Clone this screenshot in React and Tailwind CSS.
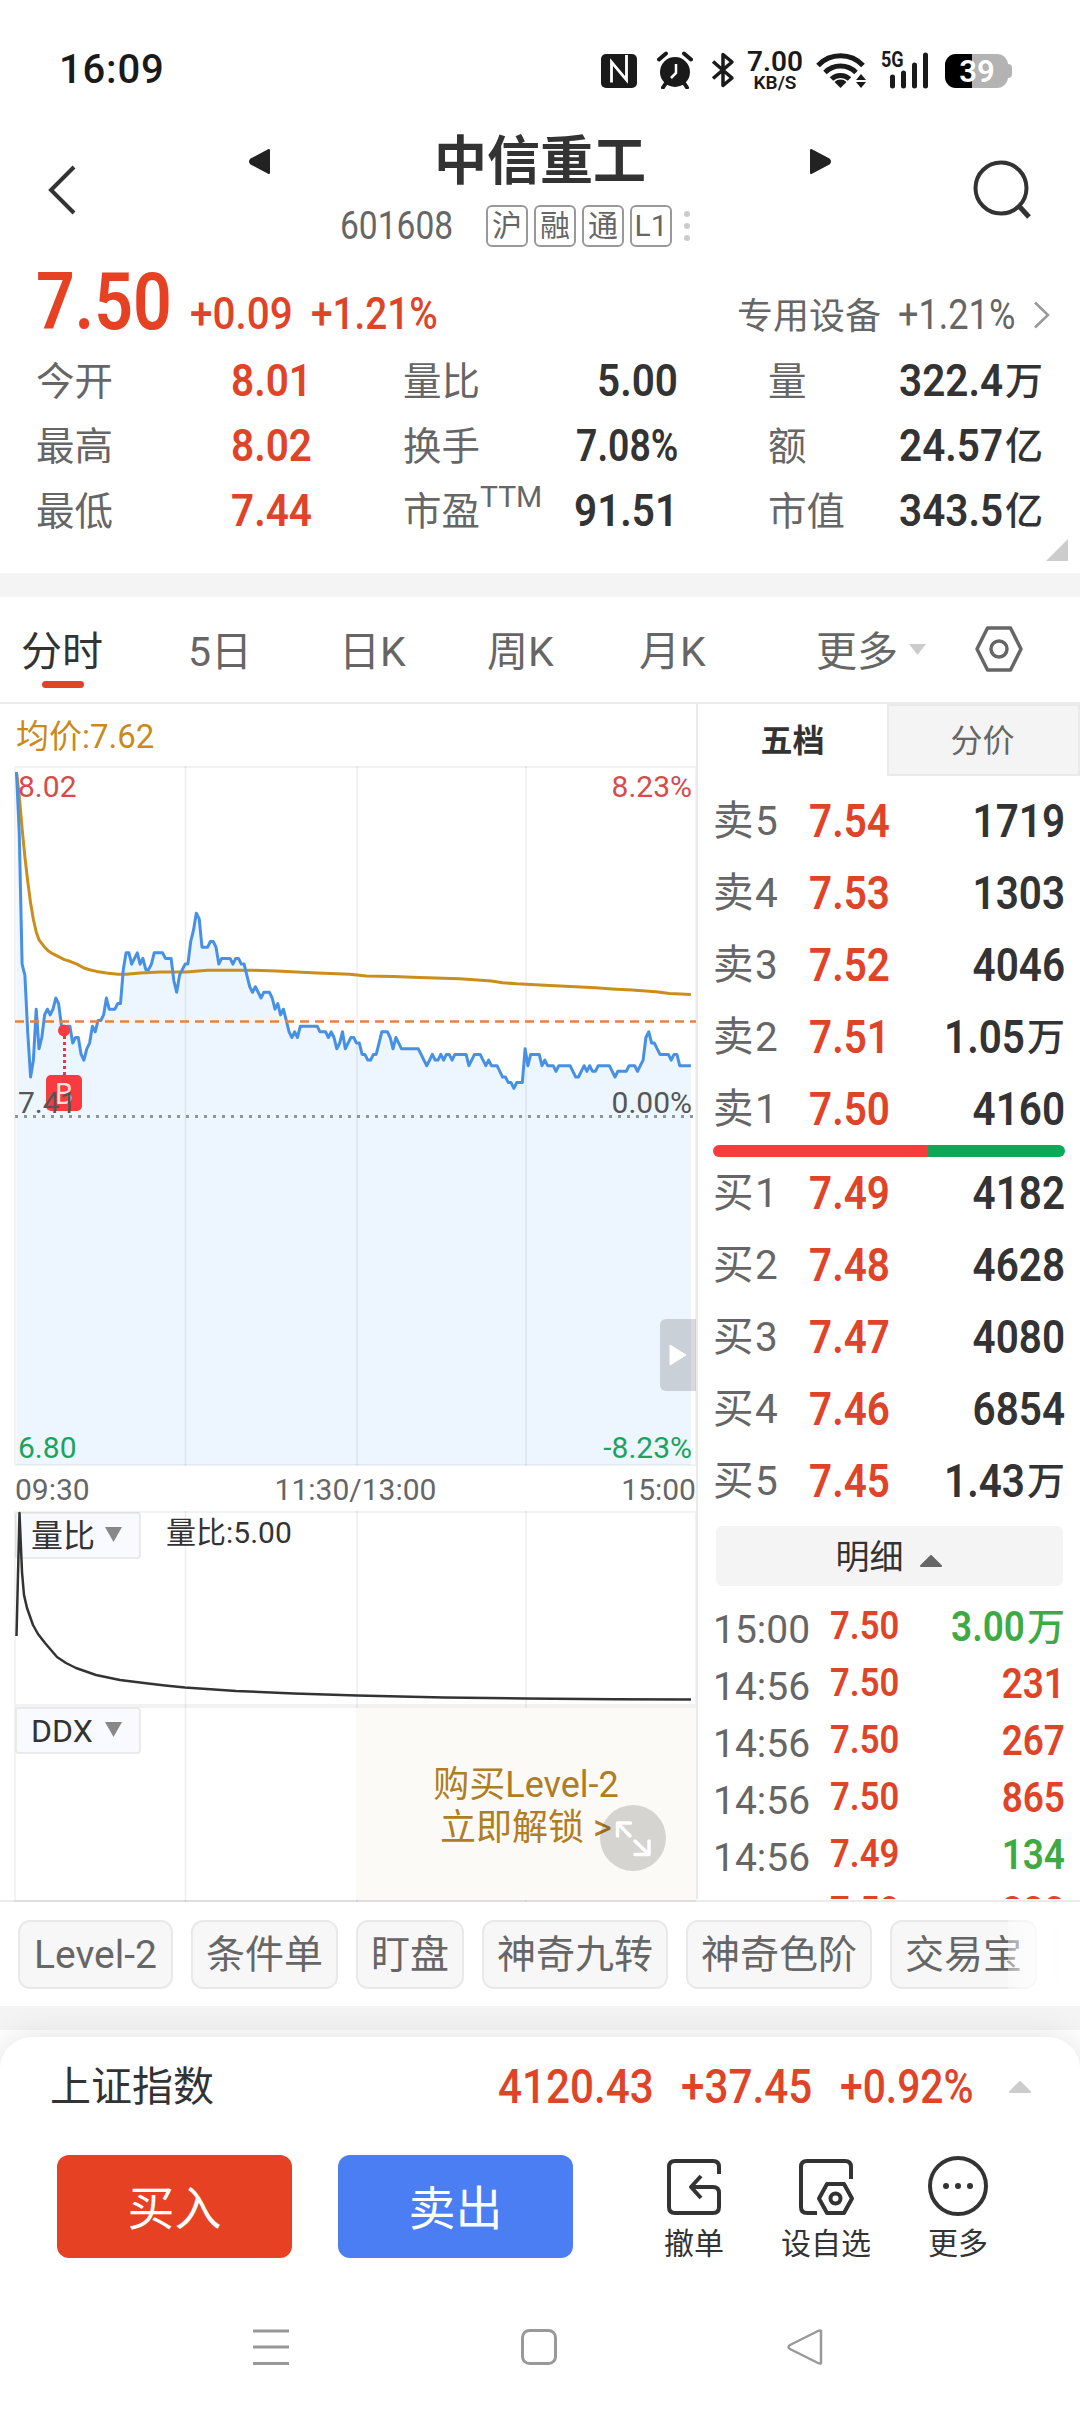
import clsx from "clsx";

// intraday data, [minute, price in cents]
const PRICES = [
  [0, 802], [1, 791], [2, 768], [3, 766], [4, 756], [5, 748], [6, 751], [7, 760],
  [8, 753], [9, 755], [10, 759], [11, 760], [12, 759], [13, 760], [14, 762], [15, 761],
  [16, 757], [17, 756], [18, 757], [19, 757], [20, 754], [21, 755], [22, 755], [23, 752],
  [24, 751], [25, 753], [26, 754], [27, 757], [28, 756], [29, 758], [30, 758], [31, 759],
  [32, 762], [33, 760], [35, 760], [36, 761], [37, 761], [38, 767], [39, 770], [40, 770],
  [41, 768], [42, 769], [43, 770], [44, 768], [45, 769], [46, 767], [47, 767], [48, 768],
  [49, 770], [52, 770], [53, 769], [55, 769], [56, 765], [57, 763], [58, 766], [59, 767],
  [60, 768], [61, 768], [62, 772], [63, 774], [64, 777], [65, 776], [66, 771], [68, 771],
  [69, 772], [70, 772], [71, 771], [72, 768], [73, 769], [76, 769], [77, 768], [78, 769],
  [79, 769], [80, 768], [81, 768], [82, 766], [83, 764], [84, 763], [85, 764], [86, 763],
  [87, 762], [88, 763], [90, 763], [91, 762], [92, 760], [93, 761], [94, 759], [95, 760],
  [96, 758], [97, 756], [98, 755], [99, 756], [100, 755], [101, 757], [107, 757], [108, 756],
  [110, 756], [111, 755], [112, 756], [113, 755], [114, 753], [115, 754], [116, 756], [117, 753],
  [118, 754], [119, 755], [120, 755], [121, 754], [122, 754], [123, 752], [124, 752], [125, 751],
  [126, 751], [127, 752], [128, 752], [129, 754], [130, 756], [132, 756], [133, 755], [134, 753],
  [135, 755], [136, 754], [137, 753], [143, 753], [144, 752], [145, 751], [146, 750], [147, 751],
  [148, 752], [149, 751], [150, 751], [151, 752], [152, 751], [153, 752], [154, 752], [155, 751],
  [156, 752], [160, 752], [161, 750], [162, 751], [163, 752], [165, 752], [166, 751], [167, 750],
  [168, 751], [169, 750], [171, 750], [172, 749], [173, 748], [174, 748], [175, 747], [176, 747],
  [177, 746], [178, 747], [180, 747], [181, 753], [182, 750], [183, 752], [186, 752], [187, 750],
  [188, 751], [189, 750], [191, 750], [192, 749], [193, 750], [197, 750], [198, 749], [199, 748],
  [200, 748], [201, 749], [202, 750], [203, 749], [204, 750], [205, 749], [206, 749], [207, 750],
  [211, 750], [212, 749], [213, 748], [214, 749], [217, 749], [218, 750], [220, 750], [221, 749],
  [222, 750], [223, 751], [224, 755], [225, 756], [226, 754], [227, 754], [228, 753], [229, 752],
  [232, 752], [233, 751], [234, 752], [235, 752], [236, 750], [240, 750],
];

const AVERAGES = [
  [0, 802], [1, 797.7], [2, 792], [3, 787], [4, 782.7], [5, 778.8], [6, 775.9], [7, 773.7],
  [8, 772.3], [10, 771], [11.4, 770.3], [13, 769.8], [15, 769.3], [17, 768.8], [19, 768.5],
  [21.5, 768], [24, 767.3], [26, 767], [28.5, 766.7], [32, 766.4], [36, 766.2], [39, 766.2],
  [44, 766.4], [51, 766.6], [60.5, 766.6], [68, 766.9], [84, 766.9], [92.5, 766.8],
  [99.6, 766.6], [107, 766.4], [118.6, 766.2], [124.5, 765.9], [134, 765.8], [143.5, 765.6],
  [157.7, 765.4], [169, 765], [173, 764.7], [178, 764.5], [189.7, 764.2], [199, 764],
  [206, 763.8], [212, 763.6], [219, 763.4], [227.6, 763.1], [232.4, 762.8], [240, 762.6],
];

const toPoints = (list) =>
  list
    .map(([m, p]) => `${(2.5 + m * 2.81).toFixed(1)},${(350.5 - (p - 741) * 5.645).toFixed(1)}`)
    .join(" ");

const pricePoints = toPoints(PRICES);
const averagePoints = toPoints(AVERAGES);

const STATS = [
  [["今开", "8.01"], ["量比", "5.00"], ["量", "322.4", "万"]],
  [["最高", "8.02"], ["换手", "7.08%"], ["额", "24.57", "亿"]],
  [["最低", "7.44"], ["市盈", "91.51"], ["市值", "343.5", "亿"]],
];

const SELLS = [
  ["卖5", "7.54", "1719"],
  ["卖4", "7.53", "1303"],
  ["卖3", "7.52", "4046"],
  ["卖2", "7.51", "1.05", "万"],
  ["卖1", "7.50", "4160"],
];

const BUYS = [
  ["买1", "7.49", "4182"],
  ["买2", "7.48", "4628"],
  ["买3", "7.47", "4080"],
  ["买4", "7.46", "6854"],
  ["买5", "7.45", "1.43", "万"],
];

const TRADES = [
  { time: "15:00", price: "7.50", volume: "3.00", unit: "万", up: false },
  { time: "14:56", price: "7.50", volume: "231", up: true },
  { time: "14:56", price: "7.50", volume: "267", up: true },
  { time: "14:56", price: "7.50", volume: "865", up: true },
  { time: "14:56", price: "7.49", volume: "134", up: false },
  { time: "14:56", price: "7.50", volume: "880", up: true },
];

// narrow digits, anchored to the left or to the right edge
const Num = ({ children, className, left }) => (
  <span
    className={clsx(
      "inline-block whitespace-nowrap scale-x-[0.89]",
      left ? "origin-left" : "origin-right",
      className
    )}
  >
    {children}
  </span>
);

const Value = ({ value, unit, className, numClassName }) => (
  <span className={clsx("flex items-center whitespace-nowrap", className)}>
    <Num className={clsx("font-semibold", numClassName)}>{value}</Num>
    {unit && <span className="ml-0.5 text-[38px] font-medium">{unit}</span>}
  </span>
);

const StatusBar = () => (
  <div className="h-[110px] pt-[50px] pl-[59px] flex items-start text-[#1a1a1a]">
    <span className="w-[542px] text-[40px] leading-[40px] font-medium tracking-[0.8px]">
      16:09
    </span>
    {/* nfc */}
    <svg width="36" height="34" viewBox="0 0 36 34" className="mt-1">
      <rect width="36" height="34" rx="5" fill="#1a1a1a" />
      <path d="M10.500 28.500V8L25.500 26V1" fill="none" stroke="#fff" strokeWidth="2.800" />
    </svg>
    {/* alarm */}
    <svg width="36" height="38" viewBox="0 0 36 38" className="ml-5 mt-px">
      <circle cx="18" cy="21" r="15" fill="#1a1a1a" />
      <path d="M2 8.500 9 2.500M34 8.500 27 2.500M9 32l-3 4.500M27 32l3 4.500" stroke="#1a1a1a" strokeWidth="4" strokeLinecap="round" />
      <path d="M19 13v9l-5 5" fill="none" stroke="#fff" strokeWidth="2.500" />
    </svg>
    {/* bluetooth */}
    <svg width="24" height="36" viewBox="0 0 24 36" className="ml-[18px] mt-0.5">
      <path d="M2 9.500 21 26 12 33.500V2.500L21 10 2 26.500" fill="none" stroke="#1a1a1a" strokeWidth="3.500" strokeLinejoin="round" />
    </svg>
    <div className="ml-[11px] w-[58px] flex flex-col items-center">
      <span className="text-[28px] leading-[24px] font-semibold">7.00</span>
      <span className="text-[19px] leading-[17px] font-semibold">KB/S</span>
    </div>
    {/* wifi */}
    <svg width="50" height="38" viewBox="0 0 50 38" className="ml-3 mt-0.5">
      <g fill="none" stroke="#1a1a1a" strokeWidth="5">
        <path d="M2 13.500a31 31 0 0 1 45 0" />
        <path d="M9 20.500a22 22 0 0 1 31 0" />
        <path d="M15.500 27a13 13 0 0 1 18 0" />
      </g>
      <path d="M24.500 36l-6-6a8.500 8.500 0 0 1 12 0z" fill="#1a1a1a" />
      <path d="M45 22l5 6h-10zM45 36l5-6h-10z" fill="#1a1a1a" />
    </svg>
    {/* signal */}
    <div className="relative ml-[15px] mt-px w-[50px] h-[38px]">
      <span className="absolute left-0 top-0 text-[22px] leading-[18px] font-bold scale-x-[0.82] origin-left">5G</span>
      <svg width="50" height="38" viewBox="0 0 50 38">
        <path d="M11.500 26v9M22.500 22v13M33.500 14v21M44.500 4v31" stroke="#1a1a1a" strokeWidth="5" strokeLinecap="round" />
      </svg>
    </div>
    {/* battery */}
    <div className="relative ml-[14px] mt-1 w-[67px] h-[34px] flex items-center">
      <div className="w-[63px] h-[34px] rounded-[11px] bg-[#b3b3b3] overflow-hidden">
        <div className="w-[27px] h-full bg-black" />
      </div>
      <div className="w-[4px] h-[14px] rounded-r-[4px] bg-[#b3b3b3]" />
      <span className="absolute left-0 top-0 w-[64px] text-center text-white text-[31px] leading-[36px] font-semibold">39</span>
    </div>
  </div>
);

const Header = () => (
  <div className="h-[148px] flex items-start">
    <svg width="32" height="52" viewBox="0 0 32 52" className="ml-[46px] mt-[54px]">
      <path d="M28 3 5 26l23 23" fill="none" stroke="#333" strokeWidth="4" />
    </svg>
    <div className="ml-[171px] w-[582px] pt-[20px]">
      <div className="flex items-center justify-between">
        <svg width="21" height="27" viewBox="0 0 21 27">
          <path d="M20 2v23L2 15.500q-2-2 0-4z" fill="#222" stroke="#222" strokeWidth="2" strokeLinejoin="round" />
        </svg>
        <h1 className="pt-0.5 text-[53px] leading-[60px] font-bold text-[#333]">中信重工</h1>
        <svg width="21" height="27" viewBox="0 0 21 27">
          <path d="M1 2v23l18-9.500q2-2 0-4z" fill="#222" stroke="#222" strokeWidth="2" strokeLinejoin="round" />
        </svg>
      </div>
      <div className="mt-[13px] pl-[91px] flex items-center text-[#666]">
        <Num left className="w-[146px] text-[39px] leading-[42px] scale-x-[0.86]!">601608</Num>
        <div className="flex gap-1.5 text-[30px]">
          {["沪", "融", "通", "L1"].map((tag) => (
            <span key={tag} className="w-[42px] h-[42px] border-2 border-[#999] rounded-[6px] flex items-center justify-center leading-none">
              {tag}
            </span>
          ))}
        </div>
        <svg width="6" height="34" viewBox="0 0 6 34" className="ml-3" fill="#ccc">
          <circle cx="3" cy="5" r="3" />
          <circle cx="3" cy="17" r="3" />
          <circle cx="3" cy="29" r="3" />
        </svg>
      </div>
    </div>
    <svg width="60" height="62" viewBox="0 0 60 62" className="ml-[141px] mt-[48px]">
      <g fill="none" stroke="#333" strokeWidth="4">
        <circle cx="29" cy="30" r="25.500" />
        <path d="M47 48l10 11" strokeWidth="5" />
      </g>
    </svg>
  </div>
);

const Quote = () => (
  <div className="relative h-[315px]">
    <div className="h-[90px] pl-[36px] flex items-baseline">
      <Num left className="w-[154px] text-[80px] leading-[88px] font-semibold text-[#e74124] scale-x-[0.85]!">7.50</Num>
      <Num left className="w-[121px] text-[44px] font-medium text-[#e04428] scale-x-[0.92]!">+0.09</Num>
      <Num left className="w-[426px] text-[44px] font-medium text-[#e04428] scale-x-[0.88]!">+1.21%</Num>
      <span className="text-[36px] text-[#666]">专用设备</span>
      <Num left className="ml-[17px] w-[135px] text-[42px] text-[#666] scale-x-[0.86]!">+1.21%</Num>
      <svg width="18" height="28" viewBox="0 0 18 28">
        <path d="M2 1.500 15 14 2 26.500" fill="none" stroke="#999" strokeWidth="2.500" />
      </svg>
    </div>
    {STATS.map((row, i) => (
      <div key={i} className="h-[65px] pl-[36px] flex items-center text-[38.500px] text-[#666]">
        {row.map(([label, value, unit], col) => (
          <div
            key={label}
            className={clsx(
              "flex items-center justify-between",
              col === 0 && "w-[276px]",
              col === 1 && "ml-[91px] w-[275px]",
              col === 2 && "ml-[90px] w-[275px]"
            )}
          >
            <span className="flex pt-[3px]">
              {label}
              {label === "市盈" && <span className="-mt-[11px] text-[30px] leading-[30px]">TTM</span>}
            </span>
            <Value
              value={value}
              unit={unit}
              className={clsx("text-[44px]", col === 0 ? "text-[#e04428]" : "text-[#333]")}
              numClassName={value.includes("%") ? "scale-x-[0.85]!" : "scale-x-[0.92]!"}
            />
          </div>
        ))}
      </div>
    ))}
    <svg width="22" height="22" viewBox="0 0 22 22" className="absolute right-3 bottom-[12px]">
      <path d="M22 0v22H0z" fill="#ccc" />
    </svg>
  </div>
);

const PeriodTabs = () => (
  <div className="h-[107px] pl-[21px] flex items-start border-b-2 border-[#eaeaea] text-[41px] leading-[50px] text-[#666] pt-[30px]">
    <div className="w-[167px] text-[#333]">
      分时
      <div className="ml-[21px] mt-1 w-[42px] h-[7px] rounded-full bg-[#e04428]" />
    </div>
    <span className="w-[151px]">5日</span>
    <span className="w-[148px]">日K</span>
    <span className="w-[152px]">周K</span>
    <span className="w-[177px]">月K</span>
    <span>更多</span>
    <svg width="17" height="11" viewBox="0 0 17 11" className="ml-[11px] mt-[17px]">
      <path d="M0 0h17L8.500 11z" fill="#ccc" />
    </svg>
    <svg width="48" height="46" viewBox="0 0 48 46" className="ml-[49px] -mt-px">
      <g fill="none" stroke="#666" strokeWidth="3.500" strokeLinejoin="round">
        <path d="M12.500 2h23L46 23 35.500 44h-23L2 23z" />
        <circle cx="24" cy="23" r="8" />
      </g>
    </svg>
  </div>
);

const GridLines = ({ height }) => (
  <g stroke="#000" strokeOpacity="0.07" strokeWidth="1.500" fill="none">
    <path d={`M171.500 0v${height}M343 0v${height}M512 0v${height}`} />
    <rect x="1" y="1" width="681" height={height - 2} />
  </g>
);

const PriceChart = () => (
  <div className="relative ml-[14px] h-[700px] text-[30px] leading-[30px]">
    <svg width="682" height="700" viewBox="0 0 682 700" className="absolute inset-0">
      <polygon points={`2.500,699 ${pricePoints} 677,699`} fill="#edf5fe" />
      <GridLines height={700} />
      <polyline points={averagePoints} fill="none" stroke="#cb8d1c" strokeWidth="3" strokeLinejoin="round" />
      <polyline points={pricePoints} fill="none" stroke="#4690e6" strokeWidth="3" strokeLinejoin="round" />
      <path d="M1 255.500h681" stroke="#e5823c" strokeWidth="2.500" strokeDasharray="9 6" />
      <path d="M1 350.500h678" stroke="#8d959d" strokeWidth="3" strokeDasharray="3 6" />
      <path d="M50.500 270v39" stroke="#dd3c40" strokeWidth="3" strokeDasharray="3 3" />
      <circle cx="50" cy="264.500" r="6" fill="#f83b3e" />
      <rect x="32" y="309" width="36" height="36" rx="5" fill="#f83b3e" />
      <text x="50" y="338" fontSize="29" textAnchor="middle" fill="#fdd">B</text>
    </svg>
    <div className="relative h-full flex flex-col justify-between pl-[4px] pr-[4px] pt-[6px] pb-[3px]">
      <div className="flex justify-between text-[#d94a4a]">
        <span>8.02</span>
        <span>8.23%</span>
      </div>
      <div className="flex justify-between text-[#555] -mt-[30px]">
        <span>7.41</span>
        <span>0.00%</span>
      </div>
      <div className="flex justify-between text-[#1ba35e]">
        <span>6.80</span>
        <span>-8.23%</span>
      </div>
    </div>
    <div className="absolute right-0 top-[553px] w-[36px] h-[72px] rounded-l-[6px] bg-black/15 flex items-center justify-center">
      <svg width="18" height="22" viewBox="0 0 18 22">
        <path d="M1 1v20l16-10z" fill="#fff" stroke="#fff" strokeLinejoin="round" />
      </svg>
    </div>
  </div>
);

const IndicatorSelect = ({ label }) => (
  <div className="w-[126px] h-[47px] pl-[14px] pt-px flex items-center border-2 border-[#eaeaea] rounded-[4px] bg-[#f8faff] text-[32px] leading-none text-[#333]">
    <span className="w-[74px] whitespace-nowrap">{label}</span>
    <svg width="17" height="15" viewBox="0 0 17 15" className="-mt-1">
      <path d="M0 0h17L8.500 15z" fill="#888" />
    </svg>
  </div>
);

const VolumeRatioChart = () => (
  <div className="relative ml-[14px] h-[195px]">
    <div className="flex items-start pt-px pl-px">
      <IndicatorSelect label="量比" />
      <span className="ml-[25px] mt-[4px] text-[30px] leading-[34px] text-[#333]">量比:5.00</span>
    </div>
    <svg width="682" height="195" viewBox="0 0 682 195" className="absolute inset-0">
      <GridLines height={195} />
      <path
        d="M2.500 125 5.500 2 8 61 10 84 13 97 19 114 24 123 31 132 43 146 52 152 62 157 82 164 106 169 130 172 151 174.500 171 176.500 222 180 280 182.500 343 184.500 430 186.500 511 187.500 600 188.200 677 188.500"
        fill="none"
        stroke="#333"
        strokeWidth="2.500"
        strokeLinejoin="round"
      />
    </svg>
  </div>
);

const LockedChart = () => (
  <div className="relative ml-[14px] h-[196px] flex">
    <svg width="682" height="196" viewBox="0 0 682 196" className="absolute inset-0">
      <GridLines height={196} />
    </svg>
    <div className="relative w-[342px] pt-px pl-px">
      <IndicatorSelect label="DDX" />
    </div>
    <div className="relative my-0.5 w-[340px] pt-[56px] bg-[#fbfaf6] text-center text-[36px] leading-[42.500px] text-[#b07c24]">
      <p>购买Level-2</p>
      <p>立即解锁 &gt;</p>
      <div className="absolute left-[244px] top-[97px] w-[66px] h-[66px] rounded-full bg-black/15">
        <svg width="66" height="66" viewBox="0 0 66 66">
          <path
            d="M30 31 18 18.500M17.500 31V18h13M35 36l13.500 13M49 36v13.500H35"
            fill="none"
            stroke="#fff"
            strokeWidth="3.500"
            strokeLinecap="round"
            strokeLinejoin="round"
          />
        </svg>
      </div>
    </div>
  </div>
);

const OrderRow = ({ label, price, volume, unit }) => (
  <div className="h-[72px] flex items-center text-[40.500px] text-[#666]">
    <span className="w-[95px] -ml-px mr-px tracking-[1.500px]">{label}</span>
    <Num left className="text-[46px] font-semibold text-[#e04428] scale-x-[0.88]!">{price}</Num>
    <Value value={volume} unit={unit} className="ml-auto text-[46px] text-[#333]" numClassName="scale-x-[0.88]!" />
  </div>
);

const OrderBook = () => (
  <div className="w-[384px] h-[1195px] border-l-2 border-[#eaeaea] overflow-hidden">
    <div className="flex h-[72px] text-[32px]">
      <div className="w-[189px] pt-0.5 flex items-center justify-center font-bold text-[#333]">五档</div>
      <div className="w-[193px] pt-0.5 pr-0.5 flex items-center justify-center border-2 border-[#eaeaea] bg-[#f4f4f4] text-[#666]">分价</div>
    </div>
    <div className="pl-[16px] pr-[15px] pt-[9px]">
      {SELLS.map(([label, price, volume, unit]) => (
        <OrderRow key={label} label={label} price={price} volume={volume} unit={unit} />
      ))}
      <div className="-ml-px flex h-3 rounded-full overflow-hidden">
        <div className="w-[215px] bg-[#f83b3e]" />
        <div className="flex-1 bg-[#0ba858]" />
      </div>
      {BUYS.map(([label, price, volume, unit]) => (
        <OrderRow key={label} label={label} price={price} volume={volume} unit={unit} />
      ))}
      <div className="mx-0.5 mt-[9px] h-[60px] pt-0.5 pr-0.5 rounded-[6px] bg-[#f4f4f4] flex items-center justify-center gap-4 text-[34px] text-[#333]">
        明细
        <svg width="22" height="12" viewBox="0 0 22 12" className="mt-2">
          <path d="M11 1 21 11H1z" fill="#666" stroke="#666" strokeWidth="2" strokeLinejoin="round" />
        </svg>
      </div>
      <div className="mt-[12px]">
        {TRADES.map(({ time, price, volume, unit, up }, i) => (
          <div key={i} className="h-[57px] flex items-center">
            <span className="w-[116px] pt-[7px] -ml-px mr-px text-[39px] text-[#666]">{time}</span>
            <Num left className="text-[39px] font-semibold text-[#e04428]">{price}</Num>
            <Value
              value={volume}
              unit={unit}
              className={clsx("ml-auto text-[42px]", up ? "text-[#e04428]" : "text-[#3daa46]")}
              numClassName="scale-x-[0.88]!"
            />
          </div>
        ))}
      </div>
    </div>
  </div>
);

const Tools = () => (
  <div className="relative h-[104px] pt-[18px] pl-[18px] flex items-start gap-[18px] overflow-hidden text-[39px] text-[#666]">
    {["Level-2", "条件单", "盯盘", "神奇九转", "神奇色阶", "交易宝", "更多"].map((name, i) => (
      <span
        key={name}
        className={clsx(
          "h-[69px] pt-0.5 shrink-0 flex items-center border-2 border-[#e9e9e9] rounded-[12px] bg-[#f7f7f7] whitespace-nowrap",
          i === 0 ? "px-[14px]" : "px-[13px]"
        )}
      >
        {name}
      </span>
    ))}
    <div className="absolute right-0 top-0 w-[72px] h-full bg-linear-to-r from-white/40 to-white to-75%" />
  </div>
);

const IndexBar = () => (
  <div className="h-[101px] pl-[50px] pb-0.5 flex items-center">
    <span className="w-[448px] pt-0.5 text-[41px] text-[#333]">上证指数</span>
    <Num left className="w-[183px] text-[48px] text-[#e04428] font-medium scale-x-[0.88]!">4120.43</Num>
    <Num left className="w-[159px] text-[48px] text-[#e04428] font-medium scale-x-[0.88]!">+37.45</Num>
    <Num left className="w-[169px] text-[48px] text-[#e04428] font-medium scale-x-[0.85]!">+0.92%</Num>
    <svg width="22" height="12" viewBox="0 0 22 12">
      <path d="M11 1 21 11H1z" fill="#ccc" stroke="#ccc" strokeWidth="2" strokeLinejoin="round" />
    </svg>
  </div>
);

const Action = ({ label, className, children }) => (
  <div className={clsx("flex flex-col items-center", className)}>
    <svg width="60" height="62" viewBox="0 0 60 62" fill="none" stroke="#333" strokeWidth="4" strokeLinejoin="round">
      {children}
    </svg>
    <span className="mt-[9px] text-[30px] leading-[36px] text-[#333] whitespace-nowrap">{label}</span>
  </div>
);

const Actions = () => (
  <div className="pt-[17px] pl-[57px] flex items-start">
    <button className="w-[235px] h-[103px] pt-1 rounded-[12px] bg-[#e74124] text-white text-[47px]">买入</button>
    <button className="ml-[46px] w-[235px] h-[103px] pt-1 rounded-[12px] bg-[#4b7ef3] text-white text-[47px]">卖出</button>
    <Action label="撤单" className="ml-[76px] w-[90px]">
      <path d="M55 19v-7q0-6-6-6H11q-6 0-6 6v40q0 6 6 6h38q6 0 6-6V38q0-6-6-6H28" />
      <path d="M37 21 27 32l10 11" />
    </Action>
    <Action label="设自选" className="ml-[41px] w-[92px]">
      <path d="M55 24V12q0-6-6-6H11q-6 0-6 6v40q0 6 6 6h10" />
      <path d="M31 29h17l8 14.500L48 58H31l-8-14.500z" />
      <circle cx="39.500" cy="43.500" r="5" />
    </Action>
    <Action label="更多" className="ml-[45px] w-[82px]">
      <circle cx="30" cy="31" r="28" />
      <path d="M18 31h.01M30 31h.01M42 31h.01" strokeWidth="6" strokeLinecap="round" />
    </Action>
  </div>
);

const NavBar = () => (
  <div className="mt-[66px] pl-[252px] flex items-start">
    <svg width="38" height="38" viewBox="0 0 38 38">
      <path d="M1 3h36M1 19h36M1 35.500h36" stroke="#999" strokeWidth="3" />
    </svg>
    <svg width="38" height="38" viewBox="0 0 38 38" className="ml-[230px]">
      <rect x="2.500" y="2.500" width="33" height="33" rx="7" fill="none" stroke="#999" strokeWidth="3" />
    </svg>
    <svg width="38" height="38" viewBox="0 0 38 38" className="ml-[228px]">
      <path d="M35 3v32q-1 1-3 0L4 21q-3-2 0-4L32 3q2-1 3 0z" fill="none" stroke="#999" strokeWidth="2.500" strokeLinejoin="round" />
    </svg>
  </div>
);

const App = () => {
  return (
    <div className="w-[1080px] h-[2412px] overflow-hidden bg-white font-['Roboto','Noto_Sans_CJK_SC',sans-serif] leading-none">
      <StatusBar />
      <Header />
      <Quote />
      <div className="h-6 bg-[#f4f4f4]" />
      <PeriodTabs />
      <div className="flex h-[1198px] border-b-2 border-[#eaeaea]">
        <div className="w-[696px]">
          <div className="h-[62px] pl-[16px] pt-0.5 flex items-center text-[33px] text-[#c98a1b]">均价:7.62</div>
          <PriceChart />
          <div className="h-[45px] pl-[15px] pt-0.5 flex items-center justify-between text-[30px] text-[#666]">
            <span>09:30</span>
            <span>11:30/13:00</span>
            <span>15:00</span>
          </div>
          <VolumeRatioChart />
          <LockedChart />
        </div>
        <OrderBook />
      </div>
      <Tools />
      <div className="h-6 bg-[#f4f4f4]" />
      <div className="relative mt-[7px] h-[375px] rounded-t-[32px] bg-white shadow-[0_0_32px_rgba(0,0,0,0.12)]">
        <IndexBar />
        <Actions />
        <NavBar />
      </div>
    </div>
  );
};

export default App;
